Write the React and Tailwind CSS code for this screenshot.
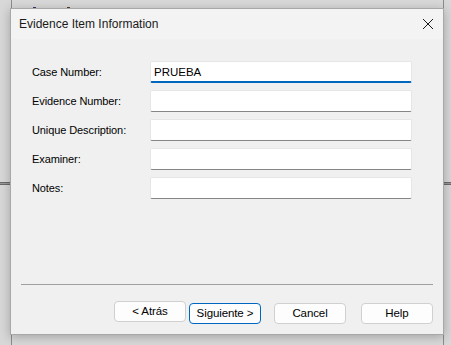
import { useState } from "react";

const fields = [
  { key: "case", label: "Case Number:" },
  { key: "evidence", label: "Evidence Number:" },
  { key: "description", label: "Unique Description:" },
  { key: "examiner", label: "Examiner:" },
  { key: "notes", label: "Notes:" },
];

function DialogButton({ children, primary }) {
  return (
    <button
      type="button"
      className={`h-[21px] w-[72px] rounded-[4px] border bg-[#fdfdfd] text-[11.5px] tracking-[-0.1px] text-black ${
        primary ? "border-[#0067c0]" : "border-[#d0d0d0]"
      }`}
    >
      {children}
    </button>
  );
}

export default function App() {
  const [values, setValues] = useState({
    case: "PRUEBA",
    evidence: "",
    description: "",
    examiner: "",
    notes: "",
  });

  function updateField(field, value) {
    setValues((current) => ({ ...current, [field]: value }));
  }

  return (
    <div
      className="relative h-[345px] w-[451px] overflow-hidden bg-gradient-to-r from-[#d8d8d8] via-[#cdcdcd] to-[#d8d8d8]"
      style={{ fontFamily: '"Liberation Sans", Arial, sans-serif' }}
    >
      {/* window behind the dialog */}
      <div className="absolute left-[11px] right-[7px] top-[-20px] bottom-[-20px] border-x border-[#8c8c8c] bg-[#d9d9d9]">
        <div className="absolute left-[21px] top-[27px] h-[2px] w-[3px] bg-[#3a3a6a]" />
        <div className="absolute left-[55px] top-[27px] h-[2px] w-[3px] bg-[#5a3a2a]" />
      </div>
      <div className="absolute left-0 right-0 top-[182px] h-[3px] border-y border-[#6a6a6a] bg-[#9a9a9a]" />

      <div className="absolute left-[10px] top-[8px] flex h-[327px] w-[434px] flex-col border border-[#a8a8a8] bg-[#f0f0f0] shadow-[0_2px_10px_rgba(0,0,0,0.25)]">
        <div className="flex h-[30px] items-center justify-between bg-[#f3f3f3] pl-[8px] pr-[8px]">
          <span className="text-[12px] text-[#1a1a1a]">Evidence Item Information</span>
          <svg width="12" height="12" viewBox="0 0 12 12" className="mr-[1px]">
            <path d="M1 1 L11 11 M11 1 L1 11" stroke="#1a1a1a" strokeWidth="1" />
          </svg>
        </div>

        <div className="flex flex-1 flex-col gap-[7px] pl-[21px] pt-[22px]">
          {fields.map((field) => (
            <div key={field.key} className="flex h-[22px] items-center">
              <label className="w-[118px] text-[11px] tracking-[-0.1px] text-black">{field.label}</label>
              <input
                value={values[field.key]}
                onChange={(e) => updateField(field.key, e.target.value)}
                className={`h-[22px] w-[262px] rounded-[2px] border border-[#e6e6e6] bg-white px-[3px] text-[11.5px] text-black outline-none ${
                  field.key === "case"
                    ? "border-b-2 border-b-[#0067c0]"
                    : "border-b-[#868686]"
                }`}
              />
            </div>
          ))}
        </div>

        <div className="mx-[10px] h-px bg-[#a0a0a0]" />
        <div className="flex items-center justify-end pb-[10px] pr-[10px] pt-[15px]">
          <DialogButton>&lt; Atrás</DialogButton>
          <div className="ml-[3px]">
            <DialogButton primary>Siguiente &gt;</DialogButton>
          </div>
          <div className="ml-[13px]">
            <DialogButton>Cancel</DialogButton>
          </div>
          <div className="ml-[15px]">
            <DialogButton>Help</DialogButton>
          </div>
        </div>
      </div>
    </div>
  );
}
